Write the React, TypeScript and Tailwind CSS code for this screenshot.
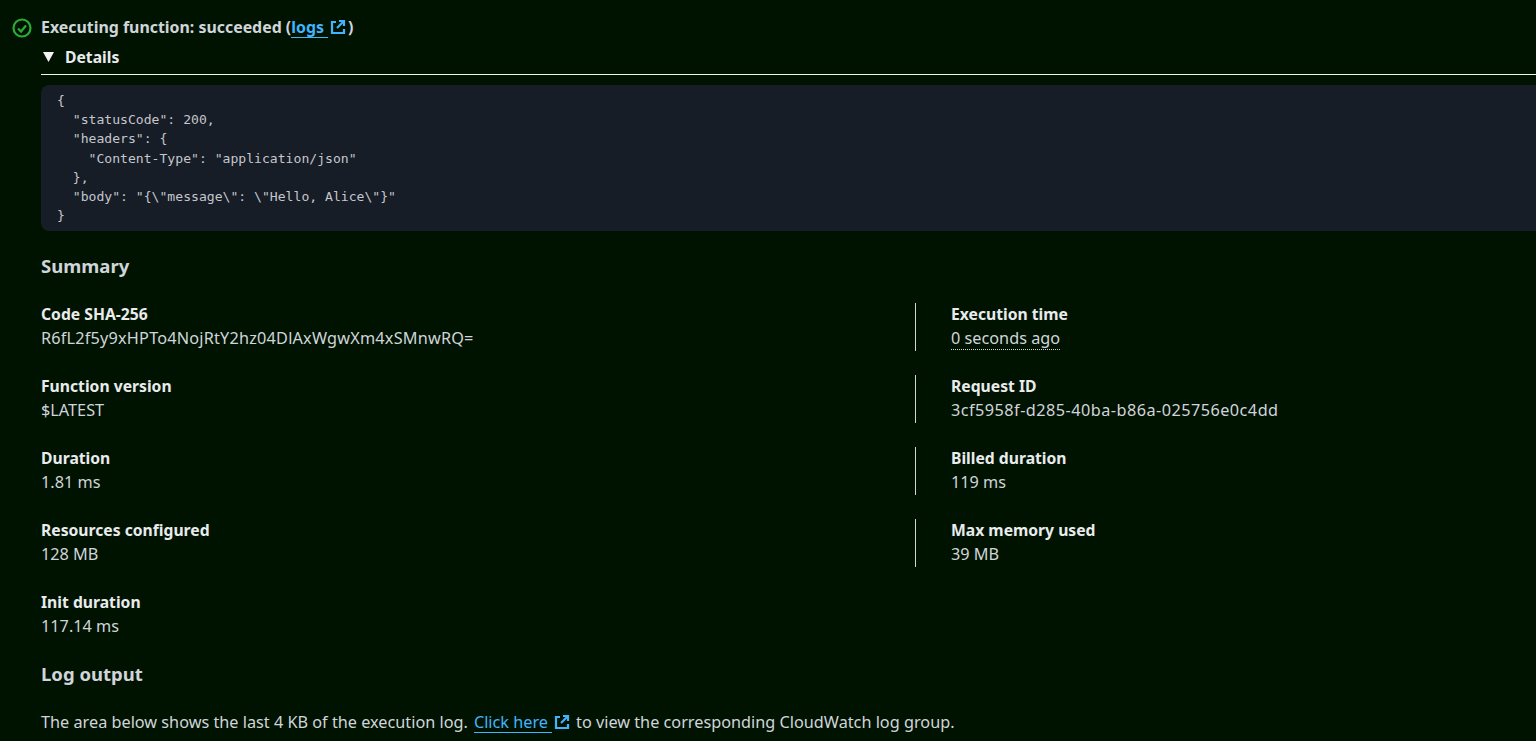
import React from 'react'

function ExternalIcon({ className }: { className?: string }) {
  return (
    <svg viewBox="0 0 16 16" fill="none" stroke="currentColor" strokeWidth="2.2" className={className}>
      <path d="M6 3H2v11h12v-4" />
      <path d="M9 2h5v5" />
      <path d="M14 2 7 9" />
    </svg>
  )
}

function Field({ label, value, dotted, valueClass }: { label: string; value: string; dotted?: boolean; valueClass?: string }) {
  return (
    <div className="h-12">
      <div className="text-[15.7px] leading-[22px] font-bold text-[#e9ebed]">{label}</div>
      <div className={`mt-px text-[16.25px] leading-6 text-[#d1d5db] ${valueClass ?? ''}`}>
        {dotted ? <span className="border-b border-dotted border-[#d1d5db]">{value}</span> : value}
      </div>
    </div>
  )
}

const rows = [
  ['Code SHA-256', 'R6fL2f5y9xHPTo4NojRtY2hz04DlAxWgwXm4xSMnwRQ=', 'Execution time', '0 seconds ago'],
  ['Function version', '$LATEST', 'Request ID', '3cf5958f-d285-40ba-b86a-025756e0c4dd'],
  ['Duration', '1.81 ms', 'Billed duration', '119 ms'],
  ['Resources configured', '128 MB', 'Max memory used', '39 MB'],
]

const json = `{
  "statusCode": 200,
  "headers": {
    "Content-Type": "application/json"
  },
  "body": "{\\"message\\": \\"Hello, Alice\\"}"
}`

export default function App() {
  return (
    <div className="h-[741px] w-[1536px] overflow-hidden bg-[#001300] font-['Noto_Sans',sans-serif]">
      <div className="flex pt-[15px] pl-3">
        <svg viewBox="0 0 20 20" fill="none" className="mt-[3px] h-5 w-5 shrink-0 text-[#29ad32]" stroke="currentColor" strokeWidth="2.2">
          <circle cx="10" cy="10" r="8.5" />
          <path d="m6 10.5 3 3 5-6" />
        </svg>
        <div className="ml-[9px] min-w-0 flex-1">
          <div className="flex h-6 text-[15.9px] leading-6 font-bold text-[#d1d5db]">
            <span>Executing function: succeeded (</span>
            <a className="h-[23px] border-b border-[#42b4ff] pr-1 text-[#42b4ff]">logs</a>
            <ExternalIcon className="mt-1 ml-[2px] h-4 w-4 text-[#42b4ff]" />
            <span className="ml-[2px]">)</span>
          </div>
          <div className="mt-2 flex h-[28px] items-center border-b border-[#f2f3f3] pb-[7px]">
            <svg viewBox="0 0 11 10" className="ml-[2px] h-[10px] w-[11px] fill-[#f2f3f3]">
              <path d="M0 0h11L5.5 10z" />
            </svg>
            <span className="ml-[11px] text-[15.7px] leading-6 font-bold text-[#e9ebed]">Details</span>
          </div>
          <pre className="mt-[10px] h-[146px] rounded-l-lg bg-[#161d26] pt-[6px] pl-4 font-['DejaVu_Sans_Mono',monospace] text-[13.1px] leading-[19.2px] text-[#c6c6cd]">
            {json}
          </pre>
          <h2 className="mt-6 text-[18.5px] leading-[22px] font-bold text-[#d1d5db]">Summary</h2>
          <div className="mt-[26px] flex flex-col gap-6">
            {rows.map((r) => (
              <div key={r[0]} className="flex">
                <div className="w-[874px]">
                  <Field label={r[0]} value={r[1]} valueClass={r[0] === 'Code SHA-256' ? 'tracking-[0.2px]' : undefined} />
                </div>
                <div className="border-l border-[#d1d5db] pl-[35px]">
                  <Field
                    label={r[2]}
                    value={r[3]}
                    dotted={r[2] === 'Execution time'}
                    valueClass={r[2] === 'Request ID' ? 'tracking-[0.46px]' : undefined}
                  />
                </div>
              </div>
            ))}
            <Field label="Init duration" value="117.14 ms" />
          </div>
          <h2 className="mt-6 text-[18.5px] leading-[22px] font-bold text-[#d1d5db]">Log output</h2>
          <p className="mt-[25px] flex text-[16.25px] leading-6 text-[#d1d5db]">
            <span>The area below shows the last 4 KB of the execution log.</span>
            <a className="ml-[6px] h-[23px] border-b border-[#42b4ff] pr-1 text-[#42b4ff]">Click here</a>
            <ExternalIcon className="mt-1 ml-[2px] h-4 w-4 text-[#42b4ff]" />
            <span className="ml-[6px]">to view the corresponding CloudWatch log group.</span>
          </p>
        </div>
      </div>
    </div>
  )
}
